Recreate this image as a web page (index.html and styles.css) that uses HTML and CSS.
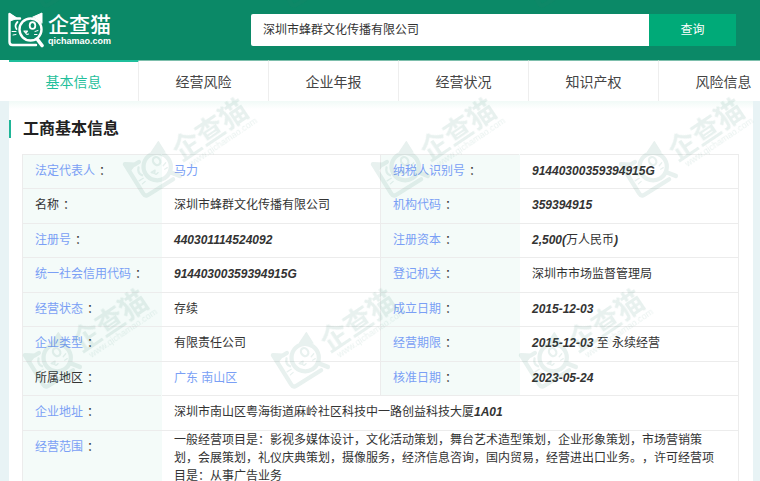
FILE: index.html
```html
<!DOCTYPE html>
<html lang="zh-CN">

<head>
    <meta charset="UTF-8">
    <meta name="viewport" content="width=device-width, initial-scale=1">
    <title>深圳市蜂群文化传播有限公司</title>
    <link rel="stylesheet" href="styles.css">
</head>

<body>
    <header class="header">
        <a class="logo" href="#">
            <svg class="logo-cat" viewBox="0 0 36 36" width="36" height="36" aria-hidden="true">
                <g id="cat" fill="none" stroke="currentColor" stroke-width="1" stroke-linecap="round" stroke-linejoin="round">
                    <path class="cat-line" d="M12 6.5 H8 L1.5 2 V30 Q1.5 33 4.5 33 H28" />
                    <path d="M2 2.5 V9 L9 6.5 Z" fill="currentColor" />
                    <path d="M25 5 L34 1 V11 Z" fill="currentColor" />
                    <circle class="cat-line" cx="22.5" cy="17.5" r="11" />
                    <path d="M29.5 27.5 L34 33.5" stroke-width="3.6" />
                    <ellipse cx="24.5" cy="13.5" rx="2.8" ry="3.4" stroke-width="1.8" />
                    <path d="M9.5 10 Q6 13.5 8.5 17" stroke-width="1.8" />
                    <path d="M16 19 H19.5 L17.8 21 Z M17.8 21 Q18 23 20.5 22" stroke-width="1.2" />
                    <path d="M27 19.5 L30 18.5 M26.5 22.5 H29 M4 19.5 H8 M5 23 L8 22.5" />
                </g>
            </svg>
            <span class="logo-text">
                <b class="logo-name">企查猫</b>
                <b class="logo-domain">qichamao.com</b>
            </span>
        </a>
        <form class="search">
            <input class="search-input" type="text" value="深圳市蜂群文化传播有限公司" aria-label="企业名称">
            <button class="search-btn" type="submit">查询</button>
        </form>
    </header>

    <nav class="tabs">
        <a class="tab active" href="#">基本信息</a>
        <a class="tab" href="#">经营风险</a>
        <a class="tab" href="#">企业年报</a>
        <a class="tab" href="#">经营状况</a>
        <a class="tab" href="#">知识产权</a>
        <a class="tab" href="#">风险信息</a>
    </nav>

    <main class="content">
        <h2 class="title">工商基本信息</h2>
        <div class="info">
            <table class="info-table">
                <colgroup>
                    <col class="col-label">
                    <col>
                    <col class="col-label">
                    <col>
                </colgroup>
                <tr>
                    <th><a href="#">法定代表人</a>：</th>
                    <td><a href="#">马力</a></td>
                    <th><a href="#">纳税人识别号</a>：</th>
                    <td><em>91440300359394915G</em></td>
                </tr>
                <tr>
                    <th><span>名称</span>：</th>
                    <td>深圳市蜂群文化传播有限公司</td>
                    <th><a href="#">机构代码</a>：</th>
                    <td><em>359394915</em></td>
                </tr>
                <tr>
                    <th><a href="#">注册号</a>：</th>
                    <td><em>440301114524092</em></td>
                    <th><a href="#">注册资本</a>：</th>
                    <td><em>2,500(</em>万人民币<em>)</em></td>
                </tr>
                <tr>
                    <th><a href="#">统一社会信用代码</a>：</th>
                    <td><em>91440300359394915G</em></td>
                    <th><a href="#">登记机关</a>：</th>
                    <td>深圳市市场监督管理局</td>
                </tr>
                <tr>
                    <th><a href="#">经营状态</a>：</th>
                    <td>存续</td>
                    <th><a href="#">成立日期</a>：</th>
                    <td><em>2015-12-03</em></td>
                </tr>
                <tr>
                    <th><a href="#">企业类型</a>：</th>
                    <td>有限责任公司</td>
                    <th><a href="#">经营期限</a>：</th>
                    <td><em>2015-12-03</em> 至 永续经营</td>
                </tr>
                <tr>
                    <th><span>所属地区</span>：</th>
                    <td><a href="#">广东</a> <a href="#">南山区</a></td>
                    <th><a href="#">核准日期</a>：</th>
                    <td><em>2023-05-24</em></td>
                </tr>
            </table>
            <table class="info-table info-more">
                <colgroup>
                    <col class="col-label">
                    <col>
                </colgroup>
                <tr>
                    <th><a href="#">企业地址</a>：</th>
                    <td>深圳市南山区粤海街道麻岭社区科技中一路创益科技大厦<em>1A01</em></td>
                </tr>
                <tr>
                    <th><a href="#">经营范围</a>：</th>
                    <td class="scope">一般经营项目是：影视多媒体设计，文化活动策划，舞台艺术造型策划，企业形象策划，市场营销策划，会展策划，礼仪庆典策划，摄像服务，经济信息咨询，国内贸易，经营进出口业务。，许可经营项目是：从事广告业务</td>
                </tr>
            </table>
        </div>
    </main>

    <!-- 水印 -->
    <svg class="watermark" aria-hidden="true">
        <defs>
            <g id="mark">
                <use href="#cat" transform="translate(0 65) rotate(-32) scale(1.24)" />
                <g transform="translate(59 64) rotate(-34)">
                    <text class="mark-name" x="0" y="0">企查猫</text>
                    <text class="mark-url" x="6" y="10">www.qichamao.com</text>
                </g>
            </g>
        </defs>
        <use href="#mark" x="22" y="-92" />
        <use href="#mark" x="270" y="-92" />
        <use href="#mark" x="518" y="-92" />
        <use href="#mark" x="122" y="98" />
        <use href="#mark" x="370" y="98" />
        <use href="#mark" x="618" y="98" />
        <use href="#mark" x="22" y="289" />
        <use href="#mark" x="270" y="289" />
        <use href="#mark" x="518" y="289" />
    </svg>
</body>

</html>
```

FILE: styles.css
```css
* {
    box-sizing: border-box;
}

body {
    position: relative;
    margin: 0;
    min-height: 100vh;
    overflow-x: hidden;
    background: #e8f3f5;
    color: #333;
    font: 12px/18px "Liberation Sans", "Noto Sans CJK SC", sans-serif;
}

a {
    color: #7a9ff5;
    text-decoration: none;
}

.header {
    display: flex;
    align-items: center;
    height: 60px;
    padding: 0 24px 0 8px;
    background: #0b8967;
}

.logo {
    display: flex;
    flex: 0 0 243px;
    align-items: center;
    gap: 4px;
    color: #fff;
}

.cat-line {
    stroke-width: var(--cat-line, 2.4px);
}

.logo-text {
    display: flex;
    flex-direction: column;
}

.logo-name {
    font-size: 21px;
    line-height: 22px;
    font-weight: 500;
}

.logo-domain {
    font-size: 9px;
    line-height: 10px;
}

.search {
    display: flex;
    flex: 1;
    height: 32px;
}

.search-input {
    flex: 1;
    min-width: 0;
    padding: 0 12px;
    border: 0;
    border-radius: 2px 0 0 2px;
    background: #fff;
    color: #333;
    font: inherit;
}

.search-btn {
    width: 87px;
    border: 0;
    background: #00aa78;
    color: #fff;
    font: inherit;
    cursor: pointer;
}

.tabs {
    display: flex;
    padding-left: 9px;
    overflow: hidden;
    background: #fff;
}

.tab {
    flex: 0 0 130px;
    height: 41px;
    border-top: 1px solid #7dbfac;
    border-right: 1px solid #eee;
    color: #444;
    font-size: 14px;
    line-height: 42px;
    text-align: center;
}

.tab.active {
    border-top: 2px solid #1fbf9c;
    color: #1fbf9c;
    line-height: 40px;
}

.content {
    margin: 0 7px 0 9px;
    padding: 19px 14px 20px 13px;
    background: linear-gradient(#f1faf7, #fff 8px);
}

.title {
    margin: 0 0 16px -13px;
    padding-left: 12px;
    border-left: 2px solid #1fb597;
    color: #222;
    font-size: 16px;
    line-height: 18px;
}

.info-table {
    width: 100%;
    table-layout: fixed;
    border-collapse: collapse;
}

.info-more {
    margin-top: -1px;
}

.col-label {
    width: 139px;
}

.info-table tr {
    height: 34px;
}

.info-table tr:nth-child(even) {
    height: 35px;
}

.info-table th,
.info-table td {
    padding: 0 12px 2px;
    border: 1px solid #ececec;
    text-align: left;
    font-weight: 400;
}

.info-table th {
    border-right-color: #f4fbf9;
    background: #f4fbf9;
}

.info-table th a,
.info-table th span {
    margin-right: 4px;
}

.info-table em {
    font-weight: 700;
}

.info-more th {
    line-height: 32px;
    vertical-align: top;
}

.info-table .scope {
    padding: 0 17px 12px 12px;
    vertical-align: top;
    text-spacing-trim: space-all;
}

.watermark {
    --cat-line: 3.4px;
    position: absolute;
    top: 0;
    left: 0;
    width: 100%;
    height: 100%;
    overflow: hidden;
    color: #2f7f6b;
    opacity: 0.11;
    pointer-events: none;
}

.mark-name {
    fill: currentColor;
    font-size: 28px;
    font-weight: 700;
}

.mark-url {
    fill: currentColor;
    font-size: 9px;
}
```
